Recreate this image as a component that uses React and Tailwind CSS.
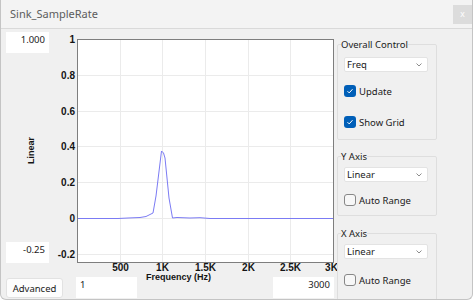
import React from "react";

const yTicks = [
  { label: "1", y: 7.5 },
  { label: "0.8", y: 43.5 },
  { label: "0.6", y: 79.5 },
  { label: "0.4", y: 114.5 },
  { label: "0.2", y: 150.5 },
  { label: "0", y: 186.5 },
  { label: "-0.2", y: 222.5 },
];

const xTicks = [
  { label: "500", x: 70.5 },
  { label: "1K", x: 112.5 },
  { label: "1.5K", x: 155.5 },
  { label: "2K", x: 198.5 },
  { label: "2.5K", x: 240.5 },
  { label: "3K", x: 281.5 },
];

// spectrum trace, chart-local coords
const trace = [
  [27.5, 186.5], [68, 186.5], [78, 186], [90, 185.5], [96, 184.5], [103, 181],
  [106, 164], [111.5, 119], [113.5, 121], [115, 126], [119, 166], [122.5, 186],
  [127, 185.5], [140, 186], [150, 185.7], [160, 186.5], [283.5, 186.5],
];

const Chart = () => (
  <svg width="287" height="242" className="block shrink-0 overflow-visible">
    <rect x="27.5" y="7.5" width="256" height="223" fill="#ffffff" />
    {yTicks.slice(1).map((t) => (
      <line key={t.label} x1="28" x2="283" y1={t.y} y2={t.y} stroke="#ebebeb" />
    ))}
    {xTicks.slice(0, 5).map((t) => (
      <line key={t.label} x1={t.x} x2={t.x} y1="8" y2="230" stroke="#ebebeb" />
    ))}
    <polyline
      points={trace.map((p) => p.join(",")).join(" ")}
      fill="none"
      stroke="#7b7bf4"
      strokeWidth="1"
    />
    <rect x="27.5" y="7.5" width="256" height="223" fill="none" stroke="#7e7e7e" />
    <g fontFamily="Liberation Sans, Arial, sans-serif" fontWeight="700" fontSize="10" fill="#141414">
      {yTicks.map((t) => (
        <text key={t.label} x="25" y={t.y} textAnchor="end" dominantBaseline="central">
          {t.label}
        </text>
      ))}
      {xTicks.map((t) => (
        <text key={t.label} x={t.x} y="238.5" textAnchor="middle">
          {t.label}
        </text>
      ))}
    </g>
  </svg>
);

const Check = ({ checked, label }) => (
  <div className="flex items-center h-[12px] gap-[3px]">
    {checked ? (
      <span className="w-[12px] h-[12px] rounded-[3px] bg-[#005fb8] flex items-center justify-center">
        <svg width="8" height="8" viewBox="0 0 8 8">
          <polyline points="1.5,4.2 3.2,5.9 6.5,2.2" fill="none" stroke="#ffffff" strokeWidth="1" />
        </svg>
      </span>
    ) : (
      <span className="w-[12px] h-[12px] rounded-[3px] border border-[#878787] bg-[#f7f7f7]" />
    )}
    <span className="text-[9.5px] leading-[13px] text-[#1a1a1a]">{label}</span>
  </div>
);

const Combo = ({ value }) => (
  <div className="w-[84px] h-[15px] bg-white border border-[#e3e3e3] rounded-[2px] flex items-center pl-[2px] pr-[5px]">
    <span className="text-[9.5px] leading-[13px] text-[#1a1a1a]">{value}</span>
    <svg width="6" height="4" viewBox="0 0 6 4" className="ml-auto">
      <polyline points="0.5,0.5 3,3 5.5,0.5" fill="none" stroke="#8c8c8c" strokeWidth="1" />
    </svg>
  </div>
);

export default function App() {
  return (
    <div className="bg-white w-[475px] h-[302px] [font-family:'Noto_Sans',sans-serif]">
      <div className="w-[473px] h-[300px] border border-t-0 border-[#c4c4c4] rounded-b-[6px] overflow-hidden bg-[#f0f0f0] flex flex-col">
        <div className="h-[29px] shrink-0 bg-[#f3f3f3] border-b border-[#d9d9d9] flex items-start">
          <span className="ml-[9px] mt-[6px] text-[11px] leading-[15px] text-[#5c5c5c]">Sink_SampleRate</span>
          <div className="ml-auto mt-[5px] w-[19px] h-[19px] bg-[#dcdcdc] flex items-center justify-center">
            <span className="text-[9px] leading-[9px] text-white [font-family:'Liberation_Sans',sans-serif]">x</span>
          </div>
        </div>

        <div className="flex flex-1 min-h-0">
          <div className="w-[336px] shrink-0 flex flex-col">
            <div className="flex mt-[3px]">
              <div className="w-[49px] h-[231px] pl-[5px] flex flex-col">
                <div className="w-[43px] h-[21px] bg-white text-right pr-[4px] pt-[1px] text-[9.5px] leading-[13px] text-[#1a1a1a]">1.000</div>
                <div className="flex-1 flex items-center justify-center pl-[6px] pt-[6px]">
                  <span className="[writing-mode:vertical-rl] rotate-180 text-[9px] leading-[10px] font-bold text-[#141414] [font-family:'Liberation_Sans',sans-serif]">Linear</span>
                </div>
                <div className="w-[43px] h-[21px] bg-white text-right pr-[4px] pt-[1px] text-[9.5px] leading-[13px] text-[#1a1a1a]">-0.25</div>
              </div>
              <Chart />
            </div>
            <div className="flex items-start pl-[5px] pr-[3px]">
              <button className="mt-[4px] w-[57px] h-[20px] bg-[#fdfdfd] border border-[#e2e2e2] rounded-[3px] text-[9.5px] leading-[13px] text-[#1a1a1a]">Advanced</button>
              <div className="ml-[13px] mt-[3px] w-[61px] h-[21px] bg-white pl-[4px] pt-[1px] text-[9.5px] leading-[13px] text-[#1a1a1a]">1</div>
              <span className="ml-[9px] mt-[-2px] text-[9px] leading-[11px] font-bold text-[#141414] [font-family:'Liberation_Sans',sans-serif]">Frequency (Hz)</span>
              <div className="ml-auto mt-[3px] w-[61px] h-[21px] bg-white text-right pr-[4px] pt-[1px] text-[9.5px] leading-[13px] text-[#1a1a1a]">3000</div>
            </div>
          </div>

          <div className="flex-1 pt-[9px] flex flex-col">
            <fieldset className="w-[100px] border border-[#dedede] rounded-[2px]">
              <legend className="ml-[3px] text-[9.5px] leading-[13px] text-[#1a1a1a]">Overall Control</legend>
              <div className="pl-[6px] pt-[6px] pb-[11px] flex flex-col">
                <Combo value="Freq" />
                <div className="mt-[13px]"><Check checked label="Update" /></div>
                <div className="mt-[19px]"><Check checked label="Show Grid" /></div>
              </div>
            </fieldset>
            <fieldset className="mt-[10px] w-[100px] border border-[#dedede] rounded-[2px]">
              <legend className="ml-[3px] text-[9.5px] leading-[13px] text-[#1a1a1a]">Y Axis</legend>
              <div className="pl-[6px] pt-[4px] pb-[9px] flex flex-col">
                <Combo value="Linear" />
                <div className="mt-[12px]"><Check label="Auto Range" /></div>
              </div>
            </fieldset>
            <fieldset className="mt-[11px] w-[100px] border border-[#dedede] rounded-[2px]">
              <legend className="ml-[3px] text-[9.5px] leading-[13px] text-[#1a1a1a]">X Axis</legend>
              <div className="pl-[6px] pt-[4px] pb-[14px] flex flex-col">
                <Combo value="Linear" />
                <div className="mt-[15px]"><Check label="Auto Range" /></div>
              </div>
            </fieldset>
          </div>
        </div>
      </div>
    </div>
  );
}
